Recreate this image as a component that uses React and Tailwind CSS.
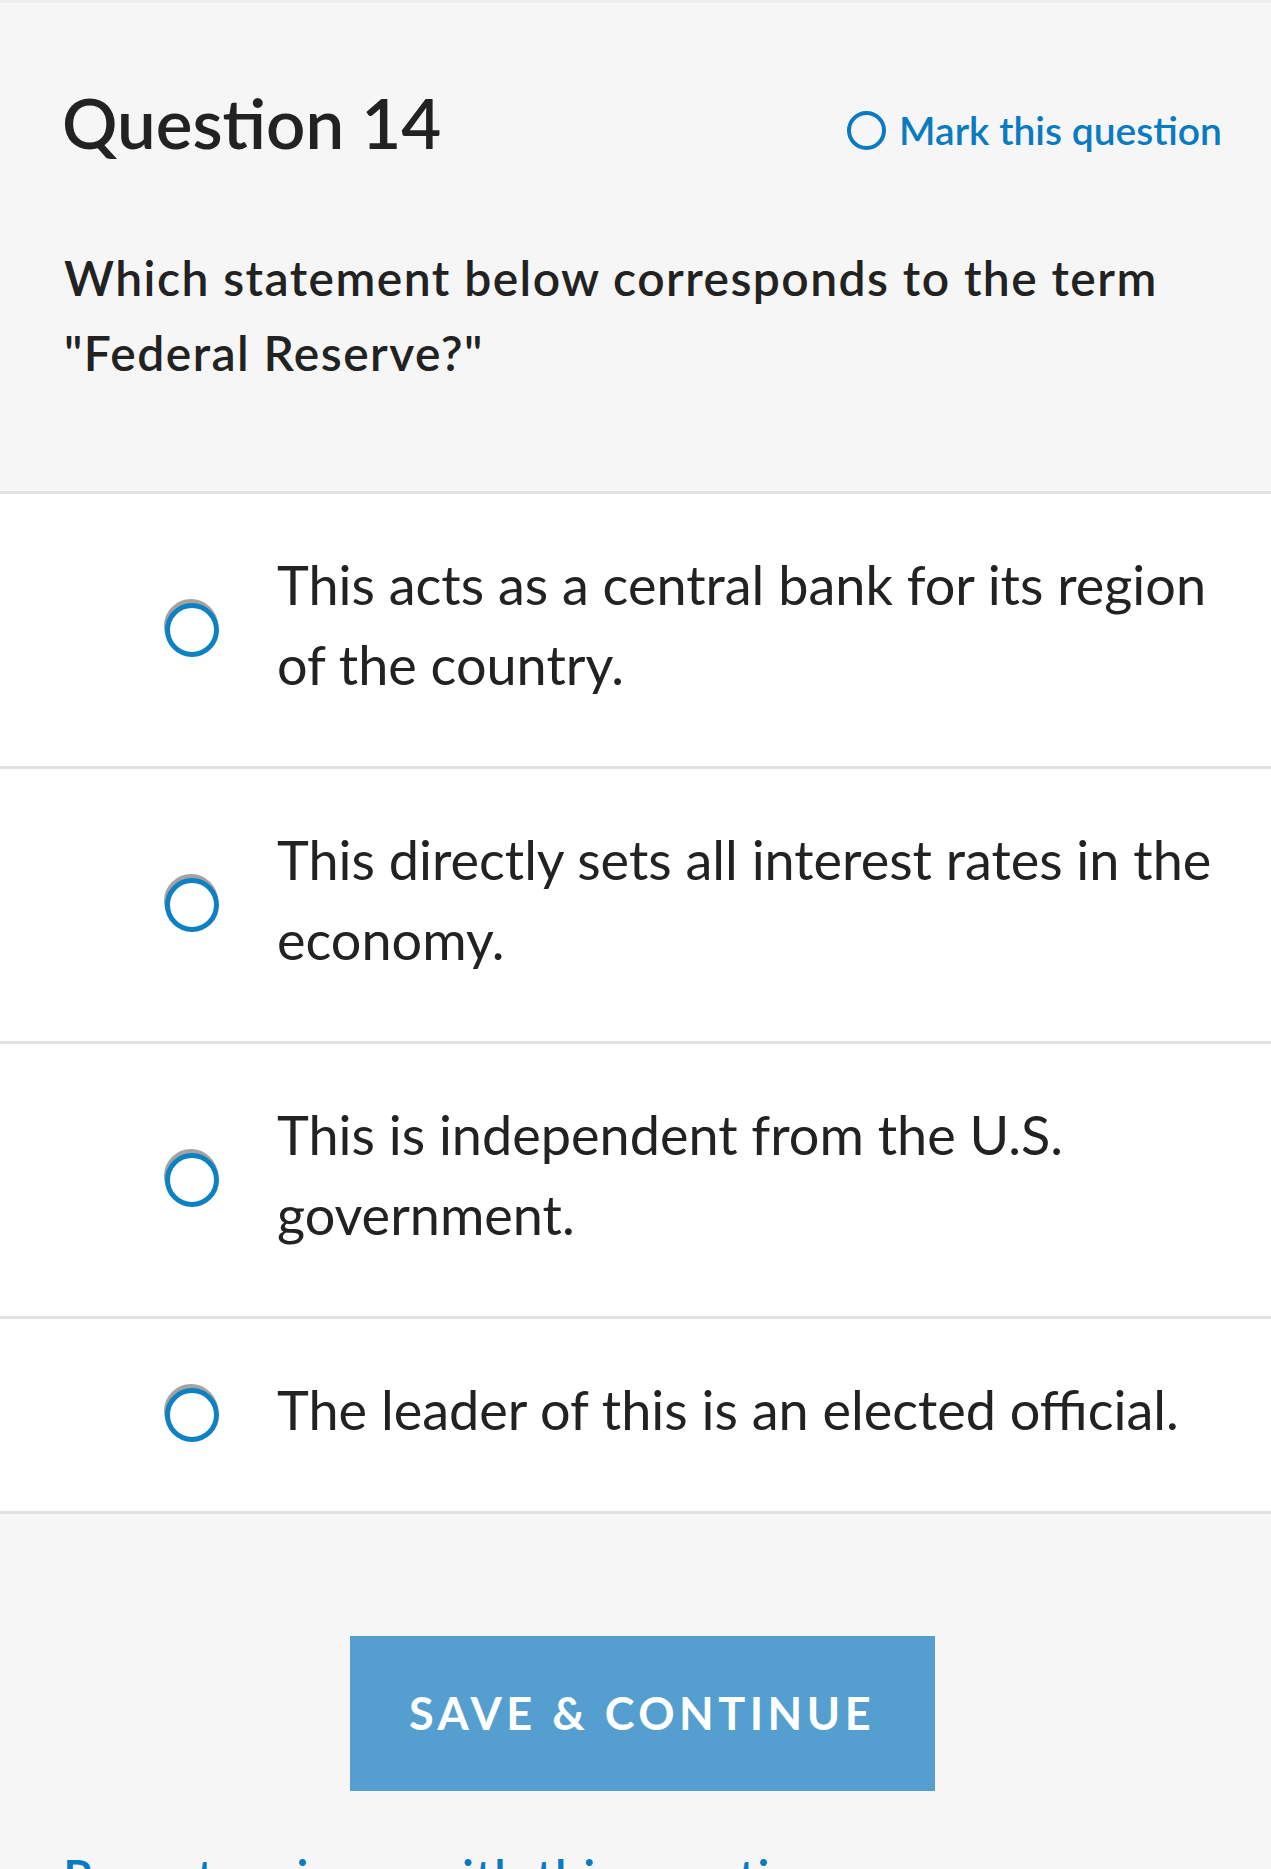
import React, { useState } from "react";

const options = [
  "This acts as a central bank for its region of the country.",
  "This directly sets all interest rates in the economy.",
  "This is independent from the U.S. government.",
  "The leader of this is an elected official.",
];

const Radio = ({ checked }) => (
  <span className="relative block w-[54px] h-[54px] mt-[10px] shrink-0">
    <span className="absolute left-[-1px] top-[-4px] w-[54px] h-[54px] rounded-full border-[5px] border-[#8c8c8c] opacity-80" />
    <span className="absolute inset-0 rounded-full border-[5px] border-[#0e80c4] bg-white flex items-center justify-center">
      {checked && <span className="w-[26px] h-[26px] rounded-full bg-[#0e80c4]" />}
    </span>
  </span>
);

const App = () => {
  const [selected, setSelected] = useState(null);
  const [marked, setMarked] = useState(false);

  return (
    <div
      className="min-h-[1869px] bg-[#f6f6f6] border-t-[3px] border-[#efefef] text-[#222222] overflow-hidden"
      style={{ fontFamily: "Lato, 'Noto Sans', sans-serif" }}
    >
      {/* Header */}
      <div className="flex items-center justify-between pl-[62px] pr-[49px] pt-[78px]">
        <h1 className="text-[69px] leading-[84px] font-semibold">Question 14</h1>
        <button
          onClick={() => setMarked(!marked)}
          className="flex items-center gap-[13px] text-[#0b7bc1] text-[39px] font-semibold mt-[14px]"
        >
          <span className="w-[39px] h-[39px] rounded-full border-[4px] border-[#0b7bc1] flex items-center justify-center">
            {marked && <span className="w-[19px] h-[19px] rounded-full bg-[#0b7bc1]" />}
          </span>
          Mark this question
        </button>
      </div>

      {/* Prompt */}
      <p className="pl-[64px] pr-[80px] pt-[75px] pb-[101px] text-[48px] leading-[75px] font-semibold tracking-[0.03em]">
        Which statement below corresponds to the term "Federal Reserve?"
      </p>

      {/* Options */}
      <div className="border-t-[3px] border-[#e1e1e4] bg-white">
        {options.map((text, i) => (
          <label
            key={i}
            onClick={() => setSelected(i)}
            className="flex items-center border-b-[3px] border-[#e1e1e4] pl-[165px] pr-[40px] pt-[51px] pb-[61px] cursor-pointer"
          >
            <Radio checked={selected === i} />
            <span className="ml-[58px] text-[54px] leading-[80px] max-w-[960px]">{text}</span>
          </label>
        ))}
      </div>

      {/* Actions */}
      <div className="flex justify-center pl-[13px] pt-[122px]">
        <button className="w-[585px] h-[155px] bg-[#549fd0] text-white text-[45px] font-bold tracking-[0.1em]">
          SAVE &amp; CONTINUE
        </button>
      </div>
      <div className="pl-[63px] pt-[62px]">
        <a className="text-[#0b7bc1] text-[48px] leading-none font-semibold tracking-[0.03em]">
          Report an issue with this question
        </a>
      </div>
    </div>
  );
};

export default App;
